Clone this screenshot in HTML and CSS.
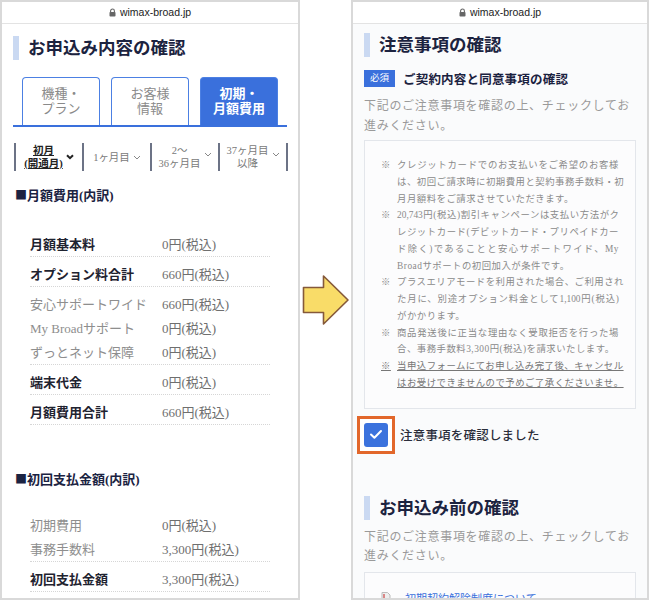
FILE: index.html
```html
<!DOCTYPE html>
<html lang="ja">
<head>
<meta charset="utf-8">
<title>お申込み内容の確認</title>
<link rel="stylesheet" href="styles.css">
</head>
<body>
<div class="stage">
  <section class="phone phone-left">
    <div class="addr">
      <svg class="lock" width="7" height="9" viewBox="0 0 7 9"><path d="M1.6 4.2V2.9a1.9 1.9 0 0 1 3.8 0v1.3" fill="none" stroke="#666" stroke-width="1.1"/><rect x="0.5" y="4" width="6" height="4.6" rx="0.8" fill="#666"/></svg>
      <span>wimax-broad.jp</span>
    </div>
    <div class="content">
      <h2 class="ttl">お申込み内容の確認</h2>
      <div class="tabs">
        <div class="tab">機種・<br>プラン</div>
        <div class="tab">お客様<br>情報</div>
        <div class="tab active">初期・<br>月額費用</div>
      </div>
      <div class="periods">
        <div class="per cur"><span class="pt">初月<br>(開通月)</span><svg class="chev" width="8" height="6" viewBox="0 0 8 6"><path d="M1 1.2l3 3 3-3" fill="none" stroke="#222" stroke-width="2"/></svg></div>
        <div class="per"><span class="pt">1ヶ月目</span><svg class="chev" width="8" height="5" viewBox="0 0 8 5"><path d="M1 1l3 3 3-3" fill="none" stroke="#888" stroke-width="1"/></svg></div>
        <div class="per"><span class="pt">2〜<br>36ヶ月目</span><svg class="chev up" width="8" height="5" viewBox="0 0 8 5"><path d="M1 1l3 3 3-3" fill="none" stroke="#888" stroke-width="1"/></svg></div>
        <div class="per"><span class="pt">37ヶ月目<br>以降</span><svg class="chev up" width="8" height="5" viewBox="0 0 8 5"><path d="M1 1l3 3 3-3" fill="none" stroke="#888" stroke-width="1"/></svg></div>
      </div>

      <h3 class="sub"><span class="sq">■</span>月額費用(内訳)</h3>
      <div class="rows rows-a">
        <div class="row line"><span class="lb">月額基本料</span><span class="val">0円(税込)</span></div>
        <div class="row line"><span class="lb">オプション料合計</span><span class="val">660円(税込)</span></div>
        <div class="row gray"><span class="lb">安心サポートワイド</span><span class="val">660円(税込)</span></div>
        <div class="row gray tight"><span class="lb">My Broadサポート</span><span class="val">0円(税込)</span></div>
        <div class="row gray tight line"><span class="lb">ずっとネット保障</span><span class="val">0円(税込)</span></div>
        <div class="row line"><span class="lb">端末代金</span><span class="val">0円(税込)</span></div>
        <div class="row line"><span class="lb">月額費用合計</span><span class="val">660円(税込)</span></div>
      </div>

      <h3 class="sub sub-2"><span class="sq">■</span>初回支払金額(内訳)</h3>
      <div class="rows rows-b">
        <div class="row gray"><span class="lb">初期費用</span><span class="val">0円(税込)</span></div>
        <div class="row gray tight line"><span class="lb">事務手数料</span><span class="val">3,300円(税込)</span></div>
        <div class="row line"><span class="lb">初回支払金額</span><span class="val">3,300円(税込)</span></div>
      </div>
    </div>
  </section>

  <div class="gap">
    <svg class="arrow" width="48" height="52" viewBox="0 0 48 52"><path d="M1.5 13.5H21.5V2L46 26 21.5 50V38.5H1.5Z" fill="#f9dc68" stroke="#85593a" stroke-width="1.6" stroke-linejoin="round"/></svg>
  </div>

  <section class="phone phone-right">
    <div class="addr">
      <svg class="lock" width="7" height="9" viewBox="0 0 7 9"><path d="M1.6 4.2V2.9a1.9 1.9 0 0 1 3.8 0v1.3" fill="none" stroke="#666" stroke-width="1.1"/><rect x="0.5" y="4" width="6" height="4.6" rx="0.8" fill="#666"/></svg>
      <span>wimax-broad.jp</span>
    </div>
    <div class="content">
      <h2 class="ttl ttl-r">注意事項の確認</h2>
      <div class="req">
        <span class="badge">必須</span>
        <span class="req-t">ご契約内容と同意事項の確認</span>
      </div>
      <p class="lead">下記のご注意事項を確認の上、チェックしてお<br>進みください。</p>
      <div class="notes">
        <div class="note"><span class="mk">※</span><div class="nt">
          <span class="ln">クレジットカードでのお支払いをご希望のお客様</span>
          <span class="ln">は、初回ご請求時に初期費用と契約事務手数料・初</span>
          <span class="ln end">月月額料をご請求させていただきます。</span>
        </div></div>
        <div class="note"><span class="mk">※</span><div class="nt">
          <span class="ln lat">20,743円(税込)割引キャンペーンは支払い方法がク</span>
          <span class="ln">レジットカード(デビットカード・プリペイドカー</span>
          <span class="ln">ド除く)であることと安心サポートワイド、My</span>
          <span class="ln end">Broadサポートの初回加入が条件です。</span>
        </div></div>
        <div class="note"><span class="mk">※</span><div class="nt">
          <span class="ln">プラスエリアモードを利用された場合、ご利用され</span>
          <span class="ln lat">た月に、別途オプション料金として1,100円(税込)</span>
          <span class="ln end">がかかります。</span>
        </div></div>
        <div class="note"><span class="mk">※</span><div class="nt">
          <span class="ln">商品発送後に正当な理由なく受取拒否を行った場</span>
          <span class="ln end">合、事務手数料3,300円(税込)を請求いたします。</span>
        </div></div>
        <div class="note strong"><span class="mk">※</span><div class="nt">
          <span class="ln">当申込フォームにてお申し込み完了後、キャンセル</span>
          <span class="ln end">はお受けできませんので予めご了承くださいませ。</span>
        </div></div>
      </div>

      <label class="agree">
        <span class="hl"><span class="cb"><svg width="14" height="11" viewBox="0 0 14 11"><path d="M2 5.5l3.4 3.3L12 2" fill="none" stroke="#fff" stroke-width="2" stroke-linecap="round" stroke-linejoin="round"/></svg></span></span>
        <span class="agree-t">注意事項を確認しました</span>
      </label>

      <h2 class="ttl ttl-2">お申込み前の確認</h2>
      <p class="lead lead-2">下記のご注意事項を確認の上、チェックしてお<br>進みください。</p>
      <div class="notes notes-2">
        <div class="doc"><svg width="10" height="12" viewBox="0 0 10 12"><path d="M1 .5h5.5L9 3v8.5H1z" fill="#eee" stroke="#bbb"/><path d="M3 2v4" stroke="#c44" stroke-width="1.2"/></svg><span class="doc-t">初期契約解除制度について</span></div>
      </div>
    </div>
  </section>
</div>
</body>
</html>
```

FILE: styles.css
```css
* { box-sizing: border-box; margin: 0; padding: 0; }

body {
  margin: 0;
  background: #fff;
  font-family: "Liberation Serif", "Noto Sans CJK JP", serif;
  color: #222;
}

.stage {
  display: flex;
  width: 650px;
  height: 600px;
}

.phone {
  width: 300px;
  height: 600px;
  border: 2px solid #d9d9d9;
  overflow: hidden;
  background: #fff;
  display: flex;
  flex-direction: column;
  flex: none;
}

.phone-right {
  width: 298px;
  background: #fafbfc;
}

.gap {
  width: 51px;
  flex: none;
  display: flex;
  align-items: center;
  justify-content: center;
}

.addr {
  height: 22px;
  flex: none;
  border-bottom: 1px solid #e3e3e3;
  background: #fff;
  display: flex;
  align-items: center;
  justify-content: center;
  gap: 4px;
  font-family: "Liberation Sans", Arial, sans-serif;
  font-size: 10.5px;
  color: #222;
  padding-bottom: 1px;
}

.content {
  padding: 0 11px;
}

.ttl {
  margin-top: 12px;
  height: 24px;
  border-left: 6px solid #cad9f2;
  padding-left: 9px;
  font-size: 17.5px;
  line-height: 24px;
  font-weight: 700;
  color: #1c2340;
}

.ttl-r { margin-top: 9px; }

/* tabs */
.tabs {
  margin-top: 17px;
  width: 274px;
  display: flex;
  gap: 11px;
  padding-left: 9px;
  border-bottom: 2px solid #3a70dc;
}

.tab {
  width: 78px;
  height: 48px;
  border: 1.5px solid #4c80e3;
  border-bottom: none;
  border-radius: 4px 4px 0 0;
  display: flex;
  align-items: center;
  justify-content: center;
  text-align: center;
  font-size: 13px;
  line-height: 14.5px;
  color: #8a8a8a;
  background: #fff;
}

.tab.active {
  background: #3a70dc;
  color: #fff;
  font-weight: 700;
}

/* periods */
.periods {
  margin-top: 16px;
  margin-left: 1px;
  width: 274px;
  height: 28px;
  display: flex;
}

.per {
  flex: 1;
  border-left: 2px solid #6c7386;
  display: flex;
  align-items: center;
  justify-content: center;
  gap: 3px;
  font-size: 10.5px;
  line-height: 13px;
  color: #7a7a7a;
  text-align: center;
}

.per:last-child { border-right: 2px solid #6c7386; }

.per.cur .pt {
  color: #222;
  font-weight: 700;
  text-decoration: underline;
}

.chev.up { margin-top: -6px; }

/* rows */
.sub {
  margin-top: 15px;
  margin-left: 2px;
  font-size: 13px;
  line-height: 18px;
  font-weight: 700;
  color: #1b2342;
}

.sq {
  font-family: "Noto Sans CJK JP", sans-serif;
  font-size: 12px;
  color: #1b2342;
}

.sub-2 { margin-top: 45px; }

.rows {
  margin-left: 17px;
  width: 240px;
}

.rows-a { margin-top: 22px; }
.rows-b { margin-top: 19px; }

.row {
  display: flex;
  padding-top: 8px;
  font-size: 13px;
  line-height: 20px;
}

.row.tight { padding-top: 4px; }

.row.line {
  padding-bottom: 1px;
  border-bottom: 1px dotted #d6d6d6;
}

.lb {
  width: 132px;
  flex: none;
  font-weight: 700;
  color: #1f2330;
}

.row.gray .lb {
  font-weight: 400;
  color: #8e8e8e;
}

.val { color: #6f6f6f; }

/* right page */
.req {
  margin-top: 13px;
  display: flex;
  align-items: center;
  gap: 8px;
  height: 17px;
}

.badge {
  width: 31px;
  height: 17px;
  background: #3a70dc;
  color: #fff;
  font-size: 9.5px;
  line-height: 17px;
  text-align: center;
}

.req-t {
  font-size: 12.5px;
  font-weight: 700;
  letter-spacing: 0.2px;
  color: #1b2240;
}

.lead {
  margin-top: 10px;
  font-size: 12px;
  letter-spacing: 0.7px;
  line-height: 19.5px;
  color: #9a9a9a;
}

.lead-2 { margin-top: 8px; }

.notes {
  margin-top: 4px;
  border: 1px solid #e3e6eb;
  background: #fcfcfd;
  padding: 16px 16px;
}

.note {
  display: flex;
  font-size: 9.4px;
  letter-spacing: 0.5px;
  line-height: 16.77px;
  color: #8a8a8a;
}

.mk {
  width: 16px;
  flex: none;
}

.nt { width: 222px; }

.ln {
  display: block;
  white-space: nowrap;
  text-align: justify;
  text-align-last: justify;
}

.ln.lat { letter-spacing: 0; }

.ln.end { text-align-last: left; }

.note.strong {
  color: #777;
}

.note.strong .mk,
.note.strong .ln {
  text-decoration: underline;
}

.agree {
  margin-top: 7px;
  margin-left: -7px;
  display: flex;
  align-items: center;
  gap: 5px;
}

.hl {
  border: 3px solid #e2672b;
  padding: 4px;
  background: #fff;
  display: block;
}

.cb {
  width: 24px;
  height: 24px;
  border-radius: 3px;
  background: #3b72dd;
  display: flex;
  align-items: center;
  justify-content: center;
}

.agree-t {
  font-size: 12.5px;
  letter-spacing: 0.2px;
  font-weight: 500;
  color: #2a2d3a;
}

.ttl-2 { margin-top: 42px; }

.notes-2 {
  margin-top: 5px;
  height: 60px;
  padding-top: 17px;
}

.doc {
  display: flex;
  align-items: center;
  gap: 14px;
}

.doc-t {
  font-size: 11px;
  color: #3a70dc;
  text-decoration: underline;
}
```
